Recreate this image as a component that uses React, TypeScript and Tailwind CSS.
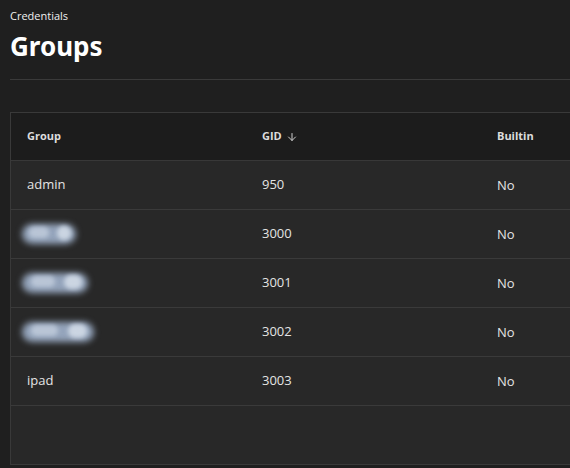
import React from 'react';
import { ArrowDown } from 'lucide-react';

type GroupRow = { name: string | null; gid: number; builtin: boolean; blob?: string };

const rows: GroupRow[] = [
  { name: 'admin', gid: 950, builtin: false },
  { name: null, gid: 3000, builtin: false, blob: 'w-[58px]' },
  { name: null, gid: 3001, builtin: false, blob: 'w-[70px]' },
  { name: null, gid: 3002, builtin: false, blob: 'w-[76px]' },
  { name: 'ipad', gid: 3003, builtin: false },
];

// Hidden names are shown as a smudged placeholder
const Smudge: React.FC<{ width?: string }> = ({ width = 'w-[60px]' }) => (
  <div className={`relative h-[24px] ${width} -ml-[7px]`}>
    <div className="absolute inset-[2px] rounded-[10px] bg-[#95a5bc] blur-[3px]" />
    <div className="absolute left-[15%] top-[20%] h-[45%] w-[35%] rounded-full bg-[#b9c5d6] blur-[2px]" />
    <div className="absolute right-[12%] top-[15%] h-[60%] w-[25%] rounded-full bg-[#cbd5e2] blur-[2px]" />
  </div>
);

export default function App() {
  return (
    <div className="min-h-[468px] bg-[#1f1f1f] pl-[10px] pt-[9px] font-['Open_Sans',sans-serif] text-[#e6e6e6] overflow-hidden">
      <div className="text-[11px] leading-[14px] text-[#f0f0f0]">Credentials</div>
      <h1 className="mt-[7px] text-[26px] leading-[32px] font-bold font-['Noto_Sans',sans-serif] text-white">Groups</h1>
      <div className="mt-[17px] h-px bg-[#3a3a3a]" />

      <div className="mt-[32px] w-[600px] h-[353px] border border-[#393939] bg-[#282828]">
        <div className="grid grid-cols-[235px_235px_1fr] h-[48px] items-center bg-[#1c1c1c] border-b border-[#383838] px-[16px] text-[11px] font-bold text-[#dcdcdc]">
          <div>Group</div>
          <div className="flex items-center gap-[4px]">
            GID <ArrowDown size={12} strokeWidth={2} className="text-[#cfcfcf]" />
          </div>
          <div>Builtin</div>
        </div>
        {rows.map((r) => (
          <div
            key={r.gid}
            className="grid grid-cols-[235px_235px_1fr] h-[49px] items-center border-b border-[#3a3a3a] px-[16px] text-[13px] text-[#e4e4e4]"
          >
            <div>{r.name ?? <Smudge width={r.blob} />}</div>
            <div>{r.gid}</div>
            <div className="pt-[2px]">{r.builtin ? 'Yes' : 'No'}</div>
          </div>
        ))}
      </div>
    </div>
  );
}
